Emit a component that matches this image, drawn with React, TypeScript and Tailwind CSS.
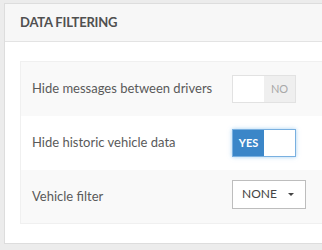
import React from "react";

export default function App() {
  const font = { fontFamily: "Lato, 'Open Sans', sans-serif" };
  return (
    <div className="w-[322px] h-[250px] bg-[#ececec] overflow-hidden pt-[3px] pl-[4px]" style={font}>
      <div className="w-[360px] border border-[#dddddd] bg-white">
        <div className="h-[38px] bg-[#f7f7f7] border-b border-[#e3e3e3] flex items-center pl-[15px]">
          <span className="text-[13px] font-bold text-[#505050] tracking-[-0.2px]">DATA FILTERING</span>
        </div>
        <div className="pt-[19px] pl-[15px] pb-[19px]">
          <div className="border border-[#f0f0f0]">
            <div className="h-[54px] bg-[#f9f9f9] flex items-center">
              <div className="w-[211px] pl-[11px] text-[13px] text-[#5a5a5a]">Hide messages between drivers</div>
              <div className="w-[64px] h-[28px] flex border border-[#e2e2e2]">
                <div className="w-1/2 bg-white"></div>
                <div className="w-1/2 bg-[#efefef] flex items-center justify-center text-[11px] text-[#a8a8a8]">NO</div>
              </div>
            </div>
            <div className="h-[54px] bg-white flex items-center">
              <div className="w-[211px] pl-[11px] text-[13px] text-[#5a5a5a]">Hide historic vehicle data</div>
              <div className="w-[64px] h-[28px] flex border border-[#79b0e0] shadow-[0_0_4px_rgba(102,175,233,0.6)]">
                <div className="w-1/2 bg-[#3b86c8] flex items-center justify-center text-[11px] font-bold text-white">YES</div>
                <div className="w-1/2 bg-white"></div>
              </div>
            </div>
            <div className="h-[53px] bg-[#f9f9f9] flex items-center">
              <div className="w-[211px] pl-[11px] text-[13px] text-[#5a5a5a]">Vehicle filter</div>
              <div className="w-[74px] h-[29px] mt-[-5px] bg-white border border-[#bdbdbd] flex items-center justify-between pl-[9px] pr-[11px]">
                <span className="text-[12px] text-[#444444]">NONE</span>
                <svg width="6" height="3" viewBox="0 0 6 3"><path d="M0 0 L6 0 L3 3 Z" fill="#444" /></svg>
              </div>
            </div>
          </div>
        </div>
      </div>
    </div>
  );
}
